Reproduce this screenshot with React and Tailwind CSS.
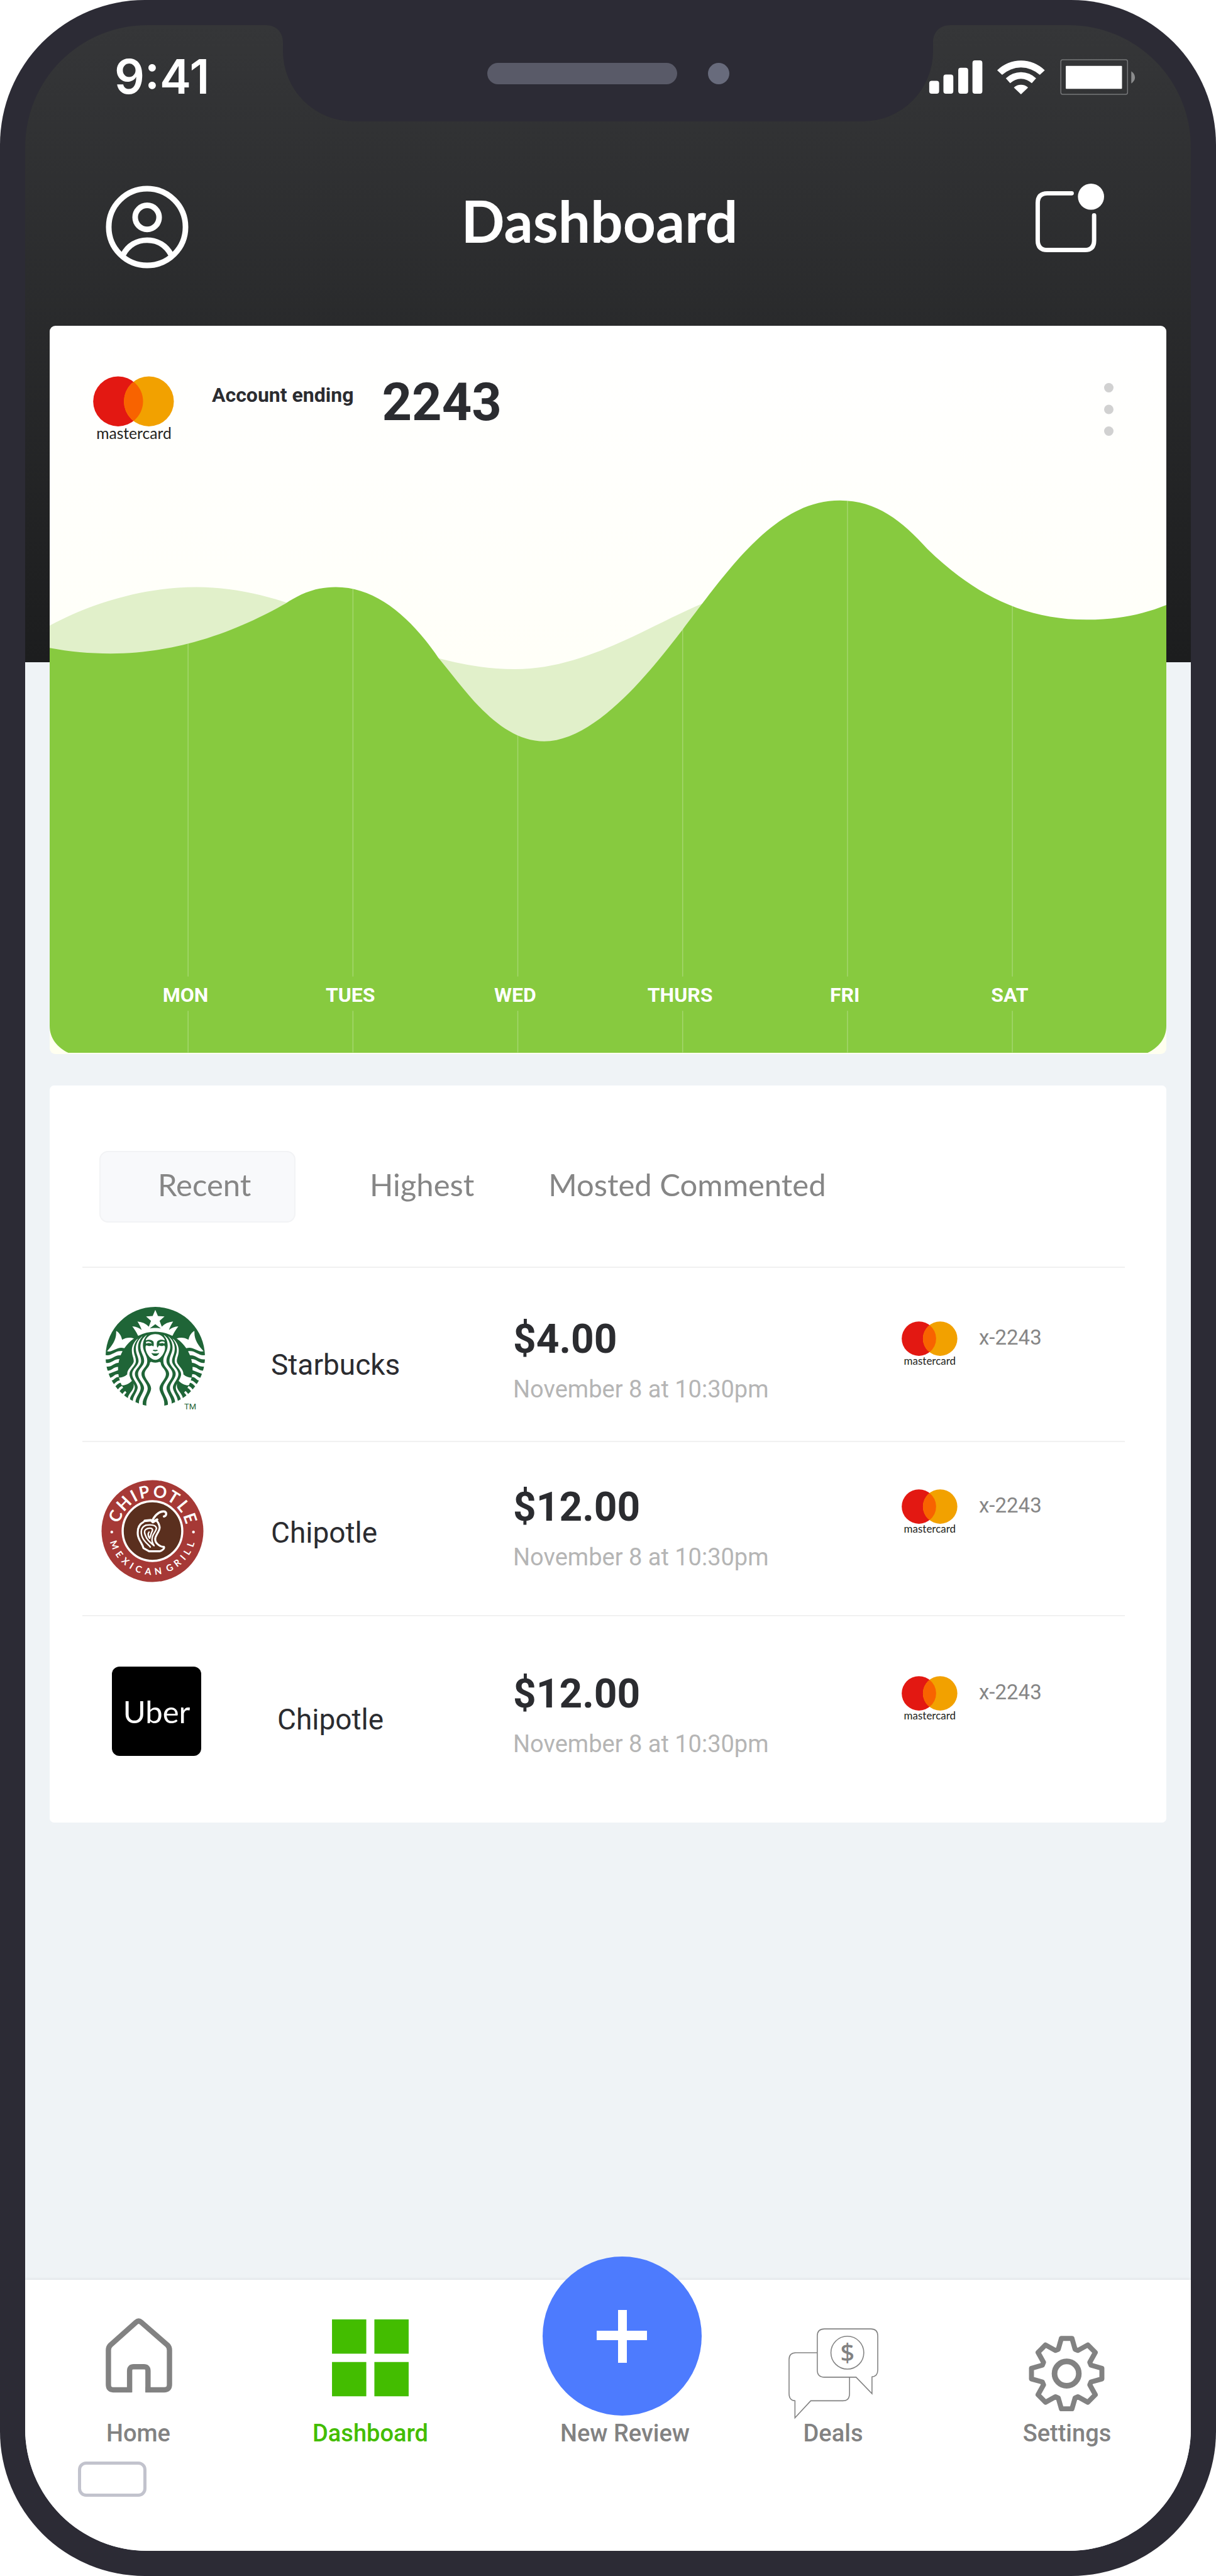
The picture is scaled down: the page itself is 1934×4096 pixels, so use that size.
import React from "react";
import { SiStarbucks } from "react-icons/si";

const LATO = "font-[Lato,sans-serif]";
const ROBOTO = "font-[Roboto,sans-serif]";

function StatusIcons() {
  return (
    <svg viewBox="1493 94 334 58" className="h-[57px] w-[330px]" fill="#fff" aria-label="Signal, Wi-Fi and battery">
      <rect x="1493" y="129" width="16" height="21" rx="4" />
      <rect x="1516" y="119" width="16" height="31" rx="4" />
      <rect x="1540" y="108" width="16" height="42" rx="4" />
      <rect x="1563" y="96" width="16" height="54" rx="4" />
      <path d="M1603 112A55 55 0 0 1 1680 112L1672 119.500A45 45 0 0 0 1611 119.500Z" />
      <path d="M1617 125A35 35 0 0 1 1666 125L1659 133A25 25 0 0 0 1624 133Z" />
      <path d="M1630 140A17 17 0 0 1 1653 140L1641.500 151Z" />
      <rect x="1706" y="95" width="108" height="56" rx="3" fill="none" stroke="#77787a" strokeWidth="1.500" />
      <rect x="1714" y="105" width="91" height="37" rx="1" />
      <path d="M1820 113.500Q1826 118 1826 123.500Q1826 129 1820 133.500Z" fill="#8b8c8d" />
    </svg>
  );
}

function ProfileIcon() {
  return (
    <svg viewBox="170 297 133 133" className="size-[132px]" fill="none" stroke="#fff" strokeWidth="9">
      <circle cx="236.500" cy="363.500" r="61.500" />
      <circle cx="236.500" cy="348" r="19.200" />
      <path d="M198 408C206 393 220 384.500 236.500 384.500S267 393 275 408" />
    </svg>
  );
}

function InboxIcon() {
  return (
    <svg viewBox="1665 295 110 110" className="size-[109px]">
      <path
        d="M1723 310.500H1684Q1668.500 310.500 1668.500 326V386Q1668.500 401.500 1684 401.500H1744Q1759 401.500 1759 386V346"
        fill="none"
        stroke="#fff"
        strokeWidth="7"
        strokeLinecap="round"
      />
      <circle cx="1754" cy="316" r="21" fill="#fff" />
    </svg>
  );
}

function Mastercard({ className }) {
  return (
    <svg viewBox="0 0 131 106" className={className} role="img" aria-label="mastercard">
      <circle cx="40.500" cy="40.500" r="40.300" fill="#e31812" />
      <circle cx="90.200" cy="40.500" r="40.300" fill="#f2a100" />
      <path d="M65.350 8.800A40.300 40.300 0 0 1 65.350 72.200A40.300 40.300 0 0 1 65.350 8.800Z" fill="#f86300" />
      <text x="66" y="101" textAnchor="middle" fontSize="25" fill="#231f20" className={LATO}>
        mastercard
      </text>
    </svg>
  );
}

const WAVE =
  "M80 1042C112 1048 144 1051 178 1051C300 1051 400 1004 459 970.600C480 957 505 944 540 944C605 944 660 992 705 1058C745 1105 800 1192 875 1192C960 1192 1052 1071 1097 1013C1170 918 1245 805 1350 805C1410 805 1450 838 1491 883C1560 950 1640 996.500 1747 996.500C1795 996.500 1835 989 1875 973V1649C1875 1670 1862 1684 1845 1692.500H110C93 1684 80 1670 80 1649Z";
const BACK_WAVE = "M80 1006C150 968 235 944 316 944C500 944 640 1076 828 1076C940 1076 1040 1008 1131 970V1200H80Z";

const DAYS = [
  { label: "MON", x: 302.5 },
  { label: "TUES", x: 567.5 },
  { label: "WED", x: 832.5 },
  { label: "THURS", x: 1097.5 },
  { label: "FRI", x: 1362.5 },
  { label: "SAT", x: 1627.5 },
];

function WaveChart() {
  return (
    <div className="relative">
      <svg viewBox="80 790 1795 904.500" preserveAspectRatio="none" className="block h-[895px] w-full">
        <defs>
          <clipPath id="wave-clip">
            <path d={WAVE} />
          </clipPath>
        </defs>
        <path d={BACK_WAVE} fill="#e1f0ca" />
        <path d={WAVE} fill="#87ca3f" />
        <g clipPath="url(#wave-clip)" stroke="#fff" strokeOpacity="0.250" strokeWidth="1.500">
          {DAYS.map((d) => (
            <path key={d.label} d={`M${d.x} 790V1570M${d.x} 1625V1692`} />
          ))}
        </g>
      </svg>
      <div className={`absolute bottom-[74px] left-[85px] right-[118px] grid grid-cols-6 text-center text-[32px] leading-[40px] font-bold text-white ${ROBOTO}`}>
        {DAYS.map((d) => (
          <span key={d.label}>{d.label}</span>
        ))}
      </div>
    </div>
  );
}

function StarbucksLogo() {
  return (
    <div className="relative w-[158px]">
      <SiStarbucks className="h-[161px] w-[158px]" color="#1f6537" />
      <span className={`absolute -bottom-[8px] right-[14px] text-[13px] leading-[16px] text-[#1f6537] ${ROBOTO}`}>TM</span>
    </div>
  );
}

const TOP_LETTERS = [["C", -68], ["H", -46], ["I", -28], ["P", -12], ["O", 11], ["T", 32], ["L", 51], ["E", 71]];
const BOTTOM_LETTERS = [
  ["M", 70], ["E", 55], ["X", 42], ["I", 31], ["C", 20], ["A", 6], ["N", -8],
  ["G", -25], ["R", -38], ["I", -49], ["L", -59], ["L", -71],
];

function ChipotleLogo() {
  return (
    <svg viewBox="0 0 165 165" className="size-[163px]" role="img" aria-label="Chipotle Mexican Grill">
      <circle cx="82.500" cy="82.500" r="82" fill="#a63936" />
      <circle cx="82.500" cy="82.500" r="48" fill="#5a2f1e" stroke="#fff" strokeWidth="3.500" />
      <g fill="#fff" fontWeight="700" textAnchor="middle" className={LATO}>
        {TOP_LETTERS.map(([c, a], i) => (
          <text key={i} x="82.500" y="28" fontSize="27" transform={`rotate(${a} 82.5 82.5)`}>{c}</text>
        ))}
        {BOTTOM_LETTERS.map(([c, a], i) => (
          <text key={i} x="82.500" y="153" fontSize="15" transform={`rotate(${a} 82.5 82.5)`}>{c}</text>
        ))}
      </g>
      <circle cx="17" cy="84" r="2.200" fill="#fff" />
      <circle cx="148.500" cy="84" r="2.200" fill="#fff" />
      <g fill="none" stroke="#fff" strokeLinecap="round" strokeLinejoin="round">
        <path d="M70 66L80 65L83 68L90 64" strokeWidth="4" />
        <path d="M82 66C88 54 96 50 102 51C106 53 105 58 101 59" strokeWidth="3.500" />
        <path d="M68 68C60 72 58 80 59 89C60 97 66 102 68 110L77 115H94C99 114 102 110 101 108C95 108 86 102 87 95C87 89 95 82 94 76C93 71 92 69 90 67" strokeWidth="3.200" />
        <path d="M72 73C64 76 63 84 66 92C69 100 76 104 79 108" strokeWidth="2.400" />
        <path d="M72 73C80 72 88 73 89 78C88 84 82 88 82 94C81 99 83 103 85 106C78 100 73 96 71 89C68 82 71 79 76 78C83 77 84 80 81 85C80 88 79 91 78 94C75 91 75 86 77 84" strokeWidth="2.400" />
      </g>
    </svg>
  );
}

function UberLogo() {
  return (
    <div className={`flex size-[142px] items-center justify-center rounded-[12px] bg-black text-[49px] leading-[48px] text-white ${LATO}`}>
      Uber
    </div>
  );
}

const TRANSACTIONS = [
  {
    name: "Starbucks", amount: "$4.00", logo: <StarbucksLogo />,
    row: "pt-[60px] h-[277px]", logoPad: "pl-[37px]", namePad: "pl-0", text: "pt-[20px]",
  },
  {
    name: "Chipotle", amount: "$12.00", logo: <ChipotleLogo />,
    row: "pt-[60px] h-[277px]", logoPad: "pl-[30px]", namePad: "pl-0", text: "pt-[10px]",
  },
  {
    name: "Chipotle", amount: "$12.00", logo: <UberLogo />,
    row: "pt-[80px] h-[330px]", logoPad: "pl-[47px]", namePad: "pl-[10px]", text: "pt-[10px]",
  },
];

function Transaction({ t }) {
  return (
    <li className={`grid grid-cols-[300fr_385fr_618fr_355fr] items-start border-t-2 border-[#f1f1f1] ${ROBOTO} ${t.row}`}>
      <div className={t.logoPad}>{t.logo}</div>
      <div className={t.text}>
        <p className={`pt-[50px] text-[46px] leading-[48px] text-[#2b2c30] ${t.namePad}`}>{t.name}</p>
      </div>
      <div className={t.text}>
        <p className="text-[64px] leading-[68px] font-bold text-[#2b2c30]">{t.amount}</p>
        <p className="mt-[20px] text-[38px] leading-[50px] text-[#b5b5b5]">November 8 at 10:30pm</p>
      </div>
      <div className={t.text}>
        <div className="flex items-start gap-[34px] pt-[5px]">
          <Mastercard className="h-[72px] w-[89px]" />
          <span className="text-[33px] leading-[52px] text-[#868686]">x-2243</span>
        </div>
      </div>
    </li>
  );
}

function HomeIcon() {
  return (
    <svg viewBox="162 3664 120 224" className="h-[222px] w-[119px]" fill="none" stroke="#828282" strokeWidth="8.500" strokeLinejoin="round">
      <path d="M211 3840.500H181Q173.500 3840.500 173.500 3832V3777Q173.500 3772 177 3768.500L218 3732Q222 3728.500 226 3732L268 3768.500Q271.500 3772 271.500 3777V3832Q271.500 3840.500 263 3840.500H233" />
      <path d="M207.500 3844.700V3810Q207.500 3803.500 214 3803.500H230.500Q237 3803.500 237 3810V3844.700" strokeLinejoin="miter" />
    </svg>
  );
}

function GridIcon() {
  return (
    <svg viewBox="535 3664 123 224" className="h-[222px] w-[122px]" fill="#43bd00">
      <path d="M535 3727.500h55v55h-55zM603 3727.500h55v55h-55zM535 3796h55v55h-55zM603 3796h55v55h-55z" />
    </svg>
  );
}

function DealsIcon() {
  return (
    <svg viewBox="1268 3664 147 224" className="h-[222px] w-[145px]" fill="none" stroke="#828282" strokeWidth="1.600">
      <path d="M1315.500 3781H1281Q1270 3781 1270 3792V3847Q1270 3858 1279.500 3858.500V3886L1305 3858.500H1357Q1367.500 3858.500 1367.500 3847V3820.500" />
      <path d="M1378 3820.500H1327Q1315.500 3820.500 1315.500 3809V3754Q1315.500 3742.700 1327 3742.700H1402Q1413 3742.700 1413 3754V3809Q1413 3819 1403.700 3820V3847Z" />
      <circle cx="1364" cy="3781" r="26.500" />
      <text x="1364" y="3795" textAnchor="middle" fontSize="40" fill="#828282" stroke="none" className="font-['Noto_Sans',sans-serif]">
        $
      </text>
    </svg>
  );
}

const GEAR = Array.from({ length: 8 }, (_, i) => (i * Math.PI) / 4)
  .flatMap((a) =>
    [[-13.5, -39], [-8.5, -56.5], [8.5, -56.5], [13.5, -39]].map(
      ([x, y]) => `${x * Math.cos(a) - y * Math.sin(a)},${x * Math.sin(a) + y * Math.cos(a)}`
    )
  )
  .join(" ");

function GearIcon() {
  return (
    <svg viewBox="-62 -150.500 124 224" className="h-[222px] w-[123px]" fill="none" stroke="#828282" strokeWidth="8" strokeLinejoin="round">
      <polygon points={GEAR} />
      <circle r="19.500" strokeWidth="9" />
    </svg>
  );
}

function PlusBadge() {
  return (
    <span className="-mt-[37px] mr-[10px] mb-[6px] flex size-[253px] items-center justify-center rounded-full bg-[#4d7bfe]">
      <svg viewBox="0 0 80 84" className="h-[84px] w-[80px]" fill="#fff">
        <path d="M34 0h14v33h32v15H48v36H34V48H0V33h34z" />
      </svg>
    </span>
  );
}

const NAV = [
  { label: "Home", icon: <HomeIcon /> },
  { label: "Dashboard", icon: <GridIcon />, active: true },
  { label: "New Review", icon: <PlusBadge /> },
  { label: "Deals", icon: <DealsIcon /> },
  { label: "Settings", icon: <GearIcon /> },
];

function Notch() {
  return (
    <div className="absolute top-0 left-1/2 flex h-[153px] w-[1034px] -translate-x-1/2 items-center justify-center gap-[49px] rounded-b-[112px] bg-[#2c2b35]">
      <svg viewBox="0 0 27 27" className="absolute top-0 right-full size-[27px]" fill="#2c2b35">
        <path d="M0 0H27V27C27 11 16 0 0 0Z" />
      </svg>
      <svg viewBox="0 0 27 27" className="absolute top-0 left-full size-[27px]" fill="#2c2b35">
        <path d="M27 0H0V27C0 11 11 0 27 0Z" />
      </svg>
      <span className="h-[34px] w-[302px] rounded-full bg-[#595a68]" />
      <span className="size-[34px] rounded-full bg-[#686b7c]" />
    </div>
  );
}

export default function App() {
  return (
    <div className="flex min-h-screen w-full bg-white">
      <div className="flex w-full flex-col rounded-[230px] bg-[#2c2b35] p-[40px]">
        <div className="relative flex flex-1 flex-col overflow-hidden rounded-[194px] bg-[#eff3f6] bg-[linear-gradient(#353638,#1c1d1e)] bg-[length:100%_1013px] bg-no-repeat">
          <Notch />
          <div className="relative flex h-[164px] items-center justify-between pr-[87px] pl-[142px] text-white">
            <span className="font-[Inter,sans-serif] text-[75px] leading-[80px] font-semibold">9:41</span>
            <StatusIcons />
          </div>

          <header className="flex h-[314px] items-center pr-[138px] pl-[128px] text-white">
            <button type="button" aria-label="Profile">
              <ProfileIcon />
            </button>
            <h1 className={`flex-1 pr-[40px] pb-[20px] text-center text-[91px] leading-[96px] font-bold ${LATO}`}>Dashboard</h1>
            <button type="button" aria-label="Notifications" className="pb-[30px]">
              <InboxIcon />
            </button>
          </header>

          <main className="flex flex-1 flex-col gap-[50px] px-[39px]">
            <section className="overflow-hidden rounded-[9px] bg-linear-to-b from-white to-[#fffff0]">
              <div className={`flex h-[263px] items-start pt-[80px] pr-[84px] pl-[69px] text-[#2b2c30] ${ROBOTO}`}>
                <Mastercard className="h-[105px] w-[129px]" />
                <h2 className="ml-[60px] text-[32px] leading-[60px] font-bold">Account ending</h2>
                <strong className="ml-[45px] text-[83px] leading-[84px] font-bold">2243</strong>
                <button type="button" aria-label="More options" className="ml-auto pt-[11px]">
                  <svg viewBox="0 0 15 84" className="h-[84px] w-[15px]" fill="#d1d1d1">
                    <circle cx="7.500" cy="7.500" r="7.500" />
                    <circle cx="7.500" cy="42" r="7.500" />
                    <circle cx="7.500" cy="76.500" r="7.500" />
                  </svg>
                </button>
              </div>
              <WaveChart />
            </section>

            <section className="rounded-[7px] bg-white pt-[104px]">
              <div role="tablist" className={`mb-[70px] flex h-[114px] items-stretch gap-[118px] pl-[79px] text-[49px] text-[#868686] ${LATO}`}>
                <button type="button" role="tab" aria-selected="true" className="w-[312px] rounded-[14px] border-2 border-[#f2f3f5] bg-[#f8f9fb] pb-[6px] pl-[91px] text-left">
                  Recent
                </button>
                <button type="button" role="tab" aria-selected="false" className="pb-[6px]">
                  Highest
                </button>
                <button type="button" role="tab" aria-selected="false" className="pb-[6px]">
                  Mosted Commented
                </button>
              </div>
              <ul className="mr-[66px] ml-[52px]">
                {TRANSACTIONS.map((t, i) => (
                  <Transaction key={i} t={t} />
                ))}
              </ul>
            </section>
          </main>

          <nav className="bg-white pb-[86px] shadow-[0_-1px_4px_rgba(0,0,0,0.08)]">
            <ul className="grid grid-cols-[240fr_498fr_312fr_350fr_394fr] pl-[60px]">
              {NAV.map((item) => (
                <li key={item.label} className="flex justify-center">
                  <a
                    href="#"
                    aria-current={item.active ? "page" : undefined}
                    className={`flex flex-col items-center text-[38px] leading-[44px] font-medium ${ROBOTO} ${item.active ? "text-[#43bd00]" : "text-[#828282]"}`}
                  >
                    {item.icon}
                    {item.label}
                  </a>
                </li>
              ))}
            </ul>
            <div className="mt-[23px] ml-[84px] h-[56px] w-[109px] rounded-[13px] border-[5px] border-[#c2c3cd]" />
          </nav>
        </div>
      </div>
    </div>
  );
}
